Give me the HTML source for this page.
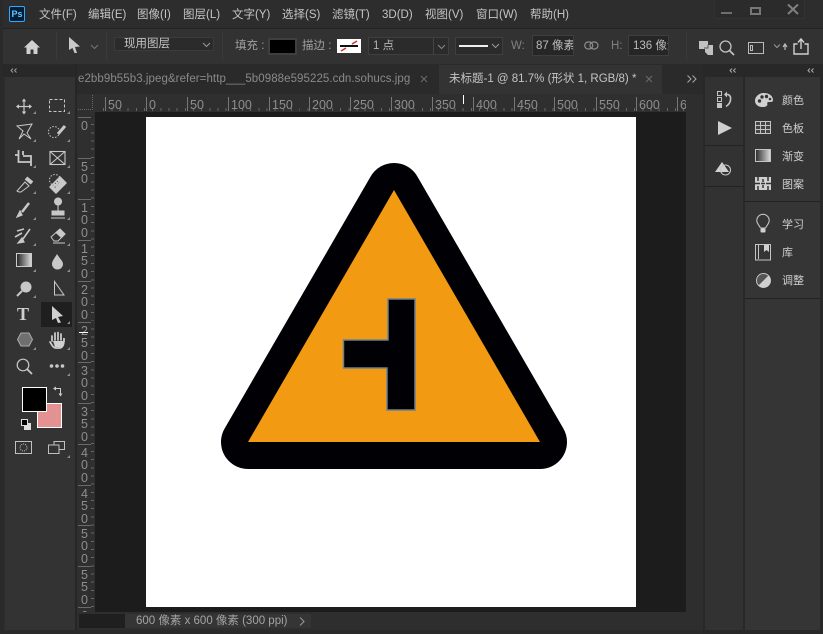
<!DOCTYPE html>
<html><head><meta charset="utf-8"><style>
*{box-sizing:border-box}
html,body{margin:0;padding:0}
body{width:823px;height:634px;overflow:hidden;background:#2c2c2c;position:relative;font-family:"Liberation Sans","Noto Sans CJK SC",sans-serif;color:#c8c8c8}
.a{position:absolute}
.t{position:absolute;white-space:nowrap;line-height:14px}
.m{font-size:11.5px;top:8px;color:#c4c4c4}
.o{font-size:11.5px;color:#a0a0a0}
.rh{position:absolute;top:97px;height:14px;border-left:1px solid #777;padding-left:2px;font-size:12.5px;line-height:16px;color:#8e8e8e;white-space:nowrap}
.rv{position:absolute;left:78px;width:13px;border-top:1px solid #6a6a6a;font-size:12.5px;line-height:12.3px;text-align:center;color:#8e8e8e;padding-top:2px;font-family:"Liberation Sans",sans-serif}
.ic{position:absolute;overflow:visible}
.p{font-size:11px;color:#cfcfcf;position:absolute;left:782px;white-space:nowrap;line-height:14px}
.tri{position:absolute;width:0;height:0;border-left:3px solid transparent;border-bottom:3px solid #8e8e8e}
</style></head><body>
<!-- title bar -->
<div class="a" style="left:0;top:0;width:823px;height:28px;background:#2d2d2d"></div>
<div class="a" style="left:9px;top:6px;width:16px;height:16px;background:#001e36;border:1px solid #31a8ff;border-radius:2px;color:#6cc4ff;font-size:9px;line-height:14px;text-align:center;font-weight:bold">Ps</div>
<span class="t m" style="left:39px">文件(F)</span>
<span class="t m" style="left:88px">编辑(E)</span>
<span class="t m" style="left:137px">图像(I)</span>
<span class="t m" style="left:183px">图层(L)</span>
<span class="t m" style="left:232px">文字(Y)</span>
<span class="t m" style="left:282px">选择(S)</span>
<span class="t m" style="left:332px">滤镜(T)</span>
<span class="t m" style="left:382px">3D(D)</span>
<span class="t m" style="left:425px">视图(V)</span>
<span class="t m" style="left:476px">窗口(W)</span>
<span class="t m" style="left:530px">帮助(H)</span>
<div class="a" style="left:714px;top:0;width:91px;height:19px;background:#2b2b2b;border:1px solid #323232;border-top:0"></div>
<div class="a" style="left:721px;top:12px;width:11px;height:2px;background:#6f6f6f"></div>
<div class="a" style="left:750px;top:7px;width:11px;height:8px;border:2px solid #777"></div>
<svg class="ic" style="left:787px;top:4px" width="12" height="11"><path d="M1 .5L11 10M11 .5L1 10" stroke="#808080" stroke-width="2"/></svg>
<!-- options bar -->
<div class="a" style="left:3px;top:28px;width:820px;height:36px;background:#323232;border-top:1px solid #232323"></div>
<svg class="ic" style="left:23px;top:39px" width="18" height="16"><path d="M9 1L17 8.500H14.500V15H10.500V10.500H7.500V15H3.500V8.500H1Z" fill="#d0d0d0"/></svg>
<svg class="ic" style="left:67px;top:36px" width="14" height="18"><path d="M2 1L13 10.500L8 11L10 17L7.500 17L5.500 12L2 14Z" fill="#c8c8c8"/></svg>
<svg class="ic" style="left:90px;top:44px" width="9" height="6"><path d="M1 1L4.500 4.500L8 1" stroke="#777" fill="none"/></svg>
<div class="a" style="left:114px;top:37px;width:100px;height:14px;background:#2b2b2b;border-radius:2px;border:1px solid #3c3c3c"></div>
<span class="t" style="left:124px;top:37px;font-size:11.5px;color:#c4c4c4">现用图层</span>
<svg class="ic" style="left:202px;top:42px" width="9" height="6"><path d="M1 1L4.500 4.500L8 1" stroke="#999" fill="none"/></svg>
<span class="t o" style="left:235px;top:39px">填充 :</span>
<div class="a" style="left:268px;top:38px;width:29px;height:17px;background:#000;border:2px solid #3f3f3f"></div>
<span class="t o" style="left:302px;top:39px">描边 :</span>
<div class="a" style="left:337px;top:39px;width:24px;height:14px;background:#fff"></div>
<div class="a" style="left:340px;top:45px;width:18px;height:2px;background:#111"></div>
<svg class="ic" style="left:337px;top:39px" width="24" height="14"><path d="M15 5L20 2M4 12L9 9" stroke="#d23030" stroke-width="1.500"/></svg>
<div class="a" style="left:368px;top:37px;width:81px;height:18px;background:#2b2b2b;border:1px solid #3f3f3f"></div>
<span class="t" style="left:373px;top:39px;font-size:11.5px;color:#b4b4b4">1 点</span>
<div class="a" style="left:433px;top:38px;width:1px;height:16px;background:#444"></div>
<svg class="ic" style="left:437px;top:44px" width="9" height="6"><path d="M1 1L4.500 4.500L8 1" stroke="#888" fill="none"/></svg>
<div class="a" style="left:455px;top:37px;width:48px;height:18px;background:#2b2b2b;border:1px solid #3f3f3f"></div>
<div class="a" style="left:459px;top:45px;width:29px;height:2px;background:#eee"></div>
<svg class="ic" style="left:491px;top:43px" width="9" height="6"><path d="M1 1L4.500 4.500L8 1" stroke="#999" fill="none"/></svg>
<span class="t" style="left:511px;top:39px;font-size:11.5px;color:#808080">W:</span>
<div class="a" style="left:532px;top:35px;width:42px;height:21px;background:#262626;border:1px solid #3e3e3e;overflow:hidden;color:#bcbcbc;font-size:11.5px;line-height:20px;padding-left:3px;white-space:nowrap">87 像素</div>
<svg class="ic" style="left:584px;top:41px" width="15" height="9"><rect x="0.700" y="1" width="8" height="7" rx="3.500" fill="none" stroke="#8c8c8c" stroke-width="1.200"/><rect x="6" y="1" width="8" height="7" rx="3.500" fill="none" stroke="#8c8c8c" stroke-width="1.200"/></svg>
<span class="t" style="left:611px;top:39px;font-size:11.5px;color:#808080">H:</span>
<div class="a" style="left:628px;top:35px;width:41px;height:21px;background:#262626;border:1px solid #3e3e3e;overflow:hidden;color:#bcbcbc;font-size:11.5px;line-height:20px;padding-left:4px;white-space:nowrap">136 像素</div>
<svg class="ic" style="left:699px;top:40px" width="16" height="16"><path d="M0 1H9V5H14V15H9L6 12V9H0Z" fill="#c0c0c0"/><path d="M5 8H9V5" stroke="#555" fill="none"/></svg>
<svg class="ic" style="left:719px;top:40px" width="16" height="16"><circle cx="6.500" cy="6.500" r="5.500" stroke="#c0c0c0" stroke-width="1.300" fill="none"/><path d="M10.500 10.500L15 15" stroke="#c0c0c0" stroke-width="1.800"/></svg>
<svg class="ic" style="left:748px;top:41px" width="16" height="14"><rect x="0.500" y="1.500" width="15" height="11" fill="none" stroke="#bbb"/><rect x="2.500" y="4.500" width="2" height="5" fill="none" stroke="#bbb"/></svg>
<svg class="ic" style="left:774px;top:43px" width="14" height="8"><path d="M0 1.500L3 4.500L6 1.500" stroke="#999" fill="none"/><path d="M11 7V2M9 4L11 1L13 4" stroke="#bbb" fill="none" stroke-width="1.200"/></svg>
<svg class="ic" style="left:793px;top:38px" width="16" height="17"><path d="M4.500 6H1V16H15V6H11.500" stroke="#d0d0d0" stroke-width="1.400" fill="none"/><path d="M8 11V1.500M5 4.500L8 1L11 4.500" stroke="#d0d0d0" stroke-width="1.400" fill="none"/></svg>
<div class="a" style="left:56px;top:32px;width:1px;height:28px;background:#3a3a3a"></div>
<div class="a" style="left:106px;top:32px;width:1px;height:28px;background:#3a3a3a"></div>
<div class="a" style="left:222px;top:32px;width:1px;height:28px;background:#3a3a3a"></div>
<div class="a" style="left:686px;top:32px;width:1px;height:28px;background:#3a3a3a"></div>
<!-- panel strip -->
<div class="a" style="left:0;top:64px;width:823px;height:3px;background:#2a2a2a"></div>
<div class="a" style="left:3px;top:65px;width:72px;height:12px;background:#282828"></div>
<svg class="ic" style="left:10px;top:68px" width="7" height="5"><path d="M3 .5L1 2.500L3 4.500M6.500 .5L4.500 2.500L6.500 4.500" stroke="#9a9a9a" fill="none"/></svg>
<!-- tools -->
<div class="a" style="left:5px;top:77px;width:71px;height:553px;background:#333"></div>
<div class="a" style="left:75px;top:64px;width:2px;height:570px;background:#262626"></div>
<!-- tabs -->
<div class="a" style="left:77px;top:67px;width:628px;height:27px;background:#2a2a2a"></div>
<span class="t" style="left:78px;top:72px;font-size:11.5px;color:#8a8a8a;letter-spacing:.07px">e2bb9b55b3.jpeg&amp;refer=http___5b0988e595225.cdn.sohucs.jpg</span>
<svg class="ic" style="left:420px;top:75px" width="8" height="8"><path d="M1 1L7 7M7 1L1 7" stroke="#6c6c6c"/></svg>
<div class="a" style="left:439px;top:65px;width:223px;height:29px;background:#333"></div>
<span class="t" style="left:449px;top:72px;font-size:11.5px;color:#c4c4c4">未标题-1 @ 81.7% (形状 1, RGB/8) *</span>
<svg class="ic" style="left:645px;top:75px" width="8" height="8"><path d="M1 1L7 7M7 1L1 7" stroke="#6c6c6c"/></svg>
<svg class="ic" style="left:687px;top:75px" width="10" height="8"><path d="M0.500 0.500L4 4L0.500 7.500M5.500 0.500L9 4L5.500 7.500" stroke="#aaa" fill="none"/></svg>
<!-- rulers -->
<div class="a" style="left:77px;top:94px;width:609px;height:18px;background:#2f2f2f"></div>
<div class="a" style="left:77px;top:112px;width:18px;height:500px;background:#2f2f2f"></div>
<div class="a" style="left:95px;top:108px;width:591px;height:3px;background:repeating-linear-gradient(90deg,transparent 0 7.170px,#666 7.170px 8.170px);background-position:1px 0"></div>
<div class="a" style="left:91px;top:117px;width:3px;height:495px;background:repeating-linear-gradient(180deg,transparent 0 7.170px,#666 7.170px 8.170px)"></div>
<div class="a" style="left:78px;top:95px;width:15px;height:15px;border-right:1px dotted #666;border-bottom:1px dotted #666"></div>
<div class="rh" style="left:105px">50</div><div class="rh" style="left:146px">0</div><div class="rh" style="left:187px">50</div><div class="rh" style="left:228px">100</div><div class="rh" style="left:269px">150</div><div class="rh" style="left:309px">200</div><div class="rh" style="left:350px">250</div><div class="rh" style="left:391px">300</div><div class="rh" style="left:432px">350</div><div class="rh" style="left:473px">400</div><div class="rh" style="left:514px">450</div><div class="rh" style="left:554px">500</div><div class="rh" style="left:596px">550</div><div class="rh" style="left:636px">600</div><div class="rh" style="left:677px;width:9px;overflow:hidden">6</div>
<div class="a" style="left:463px;top:95px;width:1px;height:9px;background:#fff"></div>
<div class="rv" style="top:117px">0</div>
<div class="rv" style="top:158px">5<br>0</div>
<div class="rv" style="top:199px">1<br>0<br>0</div>
<div class="rv" style="top:240px">1<br>5<br>0</div>
<div class="rv" style="top:281px">2<br>0<br>0</div>
<div class="rv" style="top:322px">2<br>5<br>0</div>
<div class="rv" style="top:362px">3<br>0<br>0</div>
<div class="rv" style="top:403px">3<br>5<br>0</div>
<div class="rv" style="top:444px">4<br>0<br>0</div>
<div class="rv" style="top:485px">4<br>5<br>0</div>
<div class="rv" style="top:525px">5<br>0<br>0</div>
<div class="rv" style="top:566px">5<br>5<br>0</div>
<div class="rv" style="top:607px;height:5px;overflow:hidden">6</div>
<div class="a" style="left:79px;top:332px;width:9px;height:1px;background:#fff"></div>
<!-- canvas -->
<div class="a" style="left:95px;top:112px;width:591px;height:500px;background:#1c1c1c"></div>
<div class="a" style="left:146px;top:117px;width:490px;height:490px;background:#fff"></div>
<svg class="ic" style="left:0;top:0" width="823" height="634">
<polygon points="394,190 248,442 540,442" fill="#f39a13" stroke="#000005" stroke-width="54" stroke-linejoin="round" paint-order="stroke"/>
<path d="M388 299H415V410H387V368H343.500V340H388Z" fill="#000005" stroke="#6b7f92" stroke-width="1.500"/>
</svg>
<!-- scrollbar right -->
<div class="a" style="left:686px;top:94px;width:17px;height:536px;background:#2e2e2e"></div>
<!-- status -->
<div class="a" style="left:77px;top:612px;width:626px;height:18px;background:#2e2e2e"></div>
<div class="a" style="left:79px;top:614px;width:46px;height:14px;background:#1f1f1f"></div>
<div class="a" style="left:125px;top:614px;width:186px;height:14px;background:#353535"></div>
<span class="t" style="left:136px;top:614px;font-size:11.5px;color:#a4a4a4">600 像素 x 600 像素 (300 ppi)</span>
<svg class="ic" style="left:299px;top:617px" width="6" height="9"><path d="M1 0.500L5 4.500L1 8.500" stroke="#999" fill="none"/></svg>
<div class="a" style="left:0;top:630px;width:823px;height:4px;background:#2a2a2a"></div>
<!-- tool icons -->
<svg class="ic" style="left:0;top:0;pointer-events:none" width="80" height="480" fill="none" stroke="#c8c8c8">
<path d="M24 99V114M16.500 106.500H31.500" stroke-width="1.200"/><path d="M24 98.500L21.800 101.500H26.200ZM24 114.500L21.800 111.500H26.200ZM16 106.500L19 104.300V108.700ZM32 106.500L29 104.300V108.700Z" fill="#c8c8c8" stroke="none"/>
<rect x="49.500" y="99.500" width="15" height="12" stroke-dasharray="3 2" stroke-width="1"/>
<path d="M17 126L32 124L27 133L31 139L24 134L19 139L23 131Z" stroke-width="1"/>
<circle cx="54" cy="132" r="5.500" stroke-dasharray="1.500 1.500" stroke-width="1"/><path d="M58 134L65 126" stroke-width="3"/>
<path d="M15 155H18.500M18.500 150V162H31M23 156H31V166M23 155V151" stroke-width="1.800"/>
<rect x="50" y="151.500" width="15" height="13" stroke-width="1.100"/><path d="M50 151.500L65 164.500M65 151.500L50 164.500" stroke-width="1.100"/>
<path d="M19 192L17 191L25 182L29 186L21 192Z" stroke-width="1"/><path d="M26 178L32 183" stroke-width="4"/>
<path d="M50 187L60 177L66 183L56 193Z" fill="#c8c8c8" stroke-width="1.500" stroke-linejoin="round"/><path d="M55 183L58 186M57 181L60 184M53 185L56 188" stroke="#444" stroke-dasharray="1 1.500"/><circle cx="55" cy="180" r="5.500" stroke-dasharray="1.500 1.500" stroke-width="1"/>
<path d="M29 203L22 212" stroke-width="2.500"/><path d="M20 211L17 217L22 215Z" fill="#c8c8c8" stroke-width="1.200"/>
<path d="M58 205a3.500 3.500 0 1 1 .1 0V211H64V215H52V211H58ZM51 218H65" fill="#c8c8c8" stroke-width="1"/>
<path d="M17 231L24 229M15 237L22 233M30 229L23 239" stroke-width="1.600"/><path d="M22 238L18 243L24 242Z" fill="#c8c8c8" stroke-width="1.200"/>
<path d="M51 237L60 229L65 234L58 241H54Z" stroke-width="1"/><path d="M56 232.500L60 229L65 234L61.500 237.500Z" fill="#c8c8c8"/><path d="M53 243H65" stroke-width="1"/>
<path d="M57 254C54 259 52 261 52 264a5 5 0 0 0 11 0C63 261 60 259 57 254Z" fill="#c8c8c8" stroke="none"/>
<circle cx="26" cy="287" r="5.500" fill="#c8c8c8" stroke="none"/><path d="M22 291L17 296" stroke-width="2"/>
<path d="M54.500 281.500V295L64 295Z" stroke-width="1"/>
</svg>
<svg class="ic" style="left:16px;top:253px" width="17" height="16"><defs><linearGradient id="g" x1="0" x2="1"><stop offset="0" stop-color="#222"/><stop offset="1" stop-color="#ddd"/></linearGradient></defs><rect x=".5" y=".5" width="15" height="13" fill="url(#g)" stroke="#ccc"/></svg>
<div class="a" style="left:41px;top:302px;width:31px;height:25px;background:#1f1f1f"></div>
<span class="t" style="left:17px;top:305px;font-size:18px;line-height:18px;color:#d0d0d0;font-family:'Liberation Serif',serif;font-weight:bold">T</span>
<svg class="ic" style="left:50px;top:305px" width="14" height="19"><path d="M2 1L13 11L8 12L11 17.500L8 18L6 13L2 15Z" fill="#d0d0d0"/></svg>
<svg class="ic" style="left:17px;top:332px" width="16" height="15"><path d="M4 1H12L15.500 7.500L12 14H4L.5 7.500Z" fill="#6f6f6f" stroke="#aaa"/></svg>
<svg class="ic" style="left:49px;top:331px" width="17" height="18"><path d="M3 10V5M6 9V2M9 9V1.500M12 9V3M15 11V7C15 11 15 16 11 17H7C4 17 3 14 1 11" stroke="#d0d0d0" stroke-width="1.700" fill="none" stroke-linecap="round"/><path d="M4 10H14V16H6Z" fill="#d0d0d0"/></svg>
<svg class="ic" style="left:16px;top:358px" width="17" height="17"><circle cx="7" cy="7" r="5.800" stroke="#c8c8c8" stroke-width="1.200" fill="none"/><path d="M11 11L16 16" stroke="#c8c8c8" stroke-width="1.800"/></svg>
<svg class="ic" style="left:49px;top:363px" width="16" height="6"><circle cx="2.500" cy="3" r="1.800" fill="#c8c8c8"/><circle cx="8" cy="3" r="1.800" fill="#c8c8c8"/><circle cx="13.500" cy="3" r="1.800" fill="#c8c8c8"/></svg>
<i class="tri" style="left:33px;top:111px"></i><i class="tri" style="left:67px;top:111px"></i><i class="tri" style="left:33px;top:139px"></i><i class="tri" style="left:67px;top:139px"></i><i class="tri" style="left:33px;top:165px"></i><i class="tri" style="left:67px;top:165px"></i><i class="tri" style="left:33px;top:191px"></i><i class="tri" style="left:67px;top:191px"></i><i class="tri" style="left:33px;top:217px"></i><i class="tri" style="left:67px;top:217px"></i><i class="tri" style="left:33px;top:243px"></i><i class="tri" style="left:67px;top:243px"></i><i class="tri" style="left:33px;top:269px"></i><i class="tri" style="left:67px;top:269px"></i><i class="tri" style="left:33px;top:295px"></i><i class="tri" style="left:67px;top:321px"></i><i class="tri" style="left:33px;top:347px"></i><i class="tri" style="left:67px;top:347px"></i><i class="tri" style="left:67px;top:373px"></i><i class="tri" style="left:67px;top:455px"></i>
<!-- colours -->
<div class="a" style="left:37px;top:403px;width:25px;height:25px;background:#e39191;border:1px solid #fff"></div>
<div class="a" style="left:22px;top:387px;width:25px;height:25px;background:#000;border:1px solid #fff"></div>
<svg class="ic" style="left:53px;top:386px" width="11" height="11"><path d="M1.500 2.500H7.500V9" stroke="#ccc" fill="none"/><path d="M0 2.500L3 .5V4.500ZM7.500 10.500L5.500 7.500H9.500Z" fill="#ccc"/></svg>
<div class="a" style="left:24px;top:423px;width:7px;height:7px;background:#ddd"></div>
<div class="a" style="left:21px;top:419px;width:7px;height:7px;background:#000;border:1px solid #ddd"></div>
<svg class="ic" style="left:15px;top:441px" width="17" height="13"><rect x=".5" y=".5" width="16" height="12" fill="none" stroke="#c0c0c0"/><circle cx="8.500" cy="6.500" r="3.500" fill="none" stroke="#c0c0c0" stroke-dasharray="1 1"/></svg>
<svg class="ic" style="left:48px;top:441px" width="17" height="13"><rect x="6" y=".5" width="10.500" height="8" fill="#333" stroke="#c0c0c0"/><rect x=".5" y="4" width="10.500" height="8.500" fill="#333" stroke="#c0c0c0"/></svg>
<!-- right panels -->
<div class="a" style="left:703px;top:64px;width:120px;height:570px;background:#282828"></div>
<div class="a" style="left:705px;top:77px;width:38px;height:553px;background:#323232"></div>
<div class="a" style="left:745px;top:77px;width:75px;height:553px;background:#353535"></div>
<svg class="ic" style="left:729px;top:68px" width="7" height="5"><path d="M3 .5L1 2.500L3 4.500M6.500 .5L4.500 2.500L6.500 4.500" stroke="#aaa" fill="none"/></svg>
<svg class="ic" style="left:807px;top:68px" width="7" height="5"><path d="M3 .5L1 2.500L3 4.500M6.500 .5L4.500 2.500L6.500 4.500" stroke="#aaa" fill="none"/></svg>
<div class="a" style="left:705px;top:145px;width:38px;height:1px;background:#222"></div>
<div class="a" style="left:705px;top:186px;width:38px;height:1px;background:#222"></div>
<div class="a" style="left:745px;top:201px;width:75px;height:1px;background:#222"></div>
<div class="a" style="left:745px;top:298px;width:75px;height:1px;background:#222"></div>
<svg class="ic" style="left:717px;top:91px" width="16" height="17"><rect x=".5" y=".5" width="4" height="4" fill="none" stroke="#c4c4c4"/><rect x=".5" y="6.500" width="4" height="4" fill="none" stroke="#c4c4c4"/><rect y="12" width="5" height="5" fill="#c4c4c4"/><path d="M8 3.500H11C15 5 14.500 12 9 15.500" stroke="#c4c4c4" stroke-width="1.600" fill="none"/><path d="M7 3.500L10 .5V6.500Z" fill="#c4c4c4"/></svg>
<svg class="ic" style="left:718px;top:121px" width="14" height="14"><path d="M0 0L14 7L0 14Z" fill="#d0d0d0"/></svg>
<svg class="ic" style="left:715px;top:161px" width="17" height="15"><path d="M7 1L14 11H0Z" fill="#d0d0d0"/><circle cx="10.500" cy="9" r="5" fill="none" stroke="#c4c4c4" stroke-width="1.100"/></svg>
<svg class="ic" style="left:755px;top:93px" width="18" height="14"><path d="M9 0C14 0 18 3 18 7C18 9.500 15 9 13.500 9C12 9 12 11 12.500 12C11 14 9.500 14 7 14C3 14 0 11 0 8C0 3.500 4 0 9 0Z" fill="#d0d0d0"/><circle cx="4.500" cy="8" r="1.700" fill="#333"/><circle cx="7" cy="4" r="1.700" fill="#333"/><circle cx="11.500" cy="3.500" r="1.700" fill="#333"/><circle cx="15" cy="6" r="1.300" fill="#333"/></svg>
<span class="p" style="top:94px">颜色</span>
<svg class="ic" style="left:755px;top:121px" width="16" height="13"><rect x=".5" y=".5" width="15" height="12" fill="#444" stroke="#c4c4c4"/><path d="M.5 4.500H15.500M.5 8.500H15.500M5.500 .5V12.500M10.500 .5V12.500" stroke="#c4c4c4"/></svg>
<span class="p" style="top:122px">色板</span>
<svg class="ic" style="left:755px;top:149px" width="16" height="13"><defs><linearGradient id="g2" x1="0" x2="1"><stop offset="0" stop-color="#2a2a2a"/><stop offset="1" stop-color="#ddd"/></linearGradient></defs><rect x=".5" y=".5" width="15" height="12" fill="url(#g2)" stroke="#c4c4c4"/></svg>
<span class="p" style="top:150px">渐变</span>
<svg class="ic" style="left:755px;top:177px" width="16" height="13"><rect width="16" height="13" fill="#d0d0d0"/><path d="M3 0V4M8 2V5M13 0V4M3 9V13M8 8V11M13 9V13M0 6.500H5M6 6.500H10M11 6.500H16" stroke="#333" stroke-width="1.500"/></svg>
<span class="p" style="top:178px">图案</span>
<svg class="ic" style="left:756px;top:214px" width="14" height="20"><path d="M4.500 14C3 11 .8 9.500 .8 6.500a6.200 6.200 0 0 1 12.400 0C13.200 9.500 11 11 9.500 14Z" fill="none" stroke="#c4c4c4" stroke-width="1.100"/><rect x="4.500" y="14.500" width="5" height="4" rx="1" fill="#d0d0d0"/></svg>
<span class="p" style="top:218px">学习</span>
<svg class="ic" style="left:755px;top:244px" width="16" height="17"><rect x=".5" y=".5" width="15" height="15.500" fill="none" stroke="#c4c4c4"/><path d="M3.500 1V15" stroke="#c4c4c4"/><path d="M9 1H14V8L11.500 6L9 8Z" fill="#d0d0d0"/></svg>
<span class="p" style="top:246px">库</span>
<svg class="ic" style="left:756px;top:273px" width="15" height="15"><circle cx="7.500" cy="7.500" r="7" fill="#555" stroke="#c4c4c4"/><path d="M12.500 2.500A7 7 0 0 1 2.500 12.500Z" fill="#d0d0d0"/></svg>
<span class="p" style="top:274px">调整</span>
<div class="a" style="left:0;top:0;width:3px;height:634px;background:#2a2a2a"></div>
</body></html>
